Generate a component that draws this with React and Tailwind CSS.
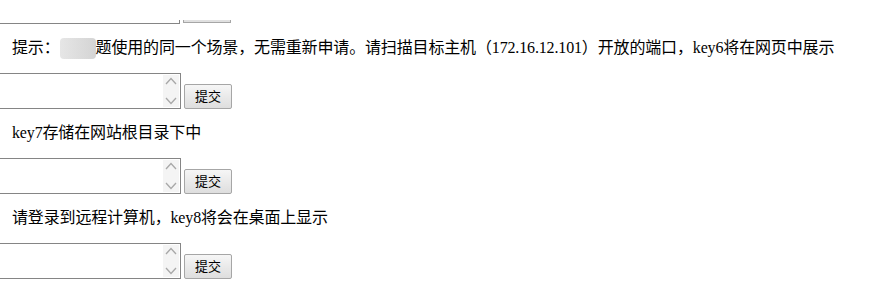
import React from "react";

function Chevron({ up }) {
  return (
    <svg width="12" height="8" viewBox="0 0 12 8" className="block">
      <path
        d={up ? "M1 7 L6 1.5 L11 7" : "M1 1 L6 6.5 L11 1"}
        fill="none"
        stroke="#a8a8a8"
        strokeWidth="1.3"
      />
    </svg>
  );
}

function AnswerBox() {
  return (
    <div className="flex items-end h-[36px]">
      <div className="flex w-[182px] h-[36px] -ml-px border border-[#858585] bg-white">
        <textarea className="flex-1 min-w-0 resize-none outline-none bg-white text-[13px]" />
        <div className="w-[16px] my-px mr-[1px] bg-[#f4f4f4] flex flex-col items-center justify-between py-[2px]">
          <Chevron up />
          <Chevron />
        </div>
      </div>
      <button className="ml-[3px] w-[48px] h-[25px] border border-[#a6a6a6] rounded-[2px] bg-gradient-to-b from-[#f6f6f6] to-[#dedede] text-[13px] leading-none text-black">
        提交
      </button>
    </div>
  );
}

function Hint({ children }) {
  return (
    <p className="mt-[15px] mb-[16px] h-[18px] pl-3 flex items-center whitespace-nowrap tracking-[-0.15px]">
      {children}
    </p>
  );
}

export default function App() {
  return (
    <div className="w-[871px] h-[302px] overflow-hidden bg-white text-black text-[16px] font-['Liberation_Serif','Noto_Sans_CJK_SC',serif]">
      {/* bottom edges of the previous answer box, scrolled off the top */}
      <div className="flex items-end h-[24px]">
        <div className="w-[181px] h-[4px] -ml-px border-b border-r border-[#858585]"></div>
        <div className="ml-[3px] w-[48px] h-[3px] mb-px border-b border-x border-[#a6a6a6] bg-[#e0e0e0]"></div>
      </div>

      <Hint>
        提示：
        <span className="inline-block w-[36px] h-[21px] bg-gradient-to-r from-[#e6e6e6] to-[#d4d4d4] rounded-sm"></span>
        题使用的同一个场景，无需重新申请。请扫描目标主机（172.16.12.101）开放的端口，key6将在网页中展示
      </Hint>
      <AnswerBox />

      <Hint>key7存储在网站根目录下中</Hint>
      <AnswerBox />

      <Hint>请登录到远程计算机，key8将会在桌面上显示</Hint>
      <AnswerBox />
    </div>
  );
}
